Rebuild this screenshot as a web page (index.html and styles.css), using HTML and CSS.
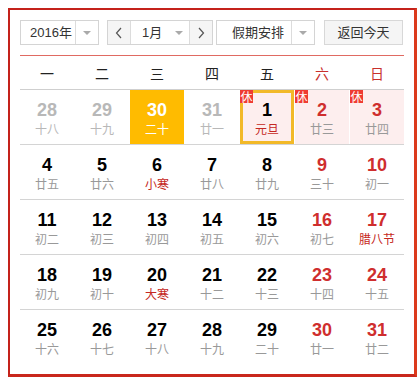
FILE: index.html
```html
<!DOCTYPE html>
<html lang="zh-CN">

<head>
    <meta charset="utf-8">
    <title>万年历</title>
    <link rel="stylesheet" href="styles.css">
</head>

<body>
    <div class="calendar">
        <!-- 顶部工具栏 -->
        <div class="toolbar">
            <div class="select year">
                <span class="selectText">2016年</span>
                <span class="selectArrow"><i></i></span>
            </div>
            <div class="monthBox">
                <span class="monthBtn">
                    <svg width="8" height="12" viewBox="0 0 8 12"><polyline points="6,1 1.5,6 6,11" /></svg>
                </span>
                <span class="monthText">1月<i></i></span>
                <span class="monthBtn">
                    <svg width="8" height="12" viewBox="0 0 8 12"><polyline points="2,1 6.5,6 2,11" /></svg>
                </span>
            </div>
            <div class="select holiday">
                <span class="selectText">假期安排</span>
                <span class="selectArrow"><i></i></span>
            </div>
            <div class="todayBtn">返回今天</div>
        </div>

        <!-- 星期 -->
        <div class="week">
            <span>一</span>
            <span>二</span>
            <span>三</span>
            <span>四</span>
            <span>五</span>
            <span class="weekend">六</span>
            <span class="weekend">日</span>
        </div>

        <!-- 日期 -->
        <div class="days">
            <div class="row">
                <div class="day other"><b>28</b><em>十八</em></div>
                <div class="day other"><b>29</b><em>十九</em></div>
                <div class="day today"><b>30</b><em>二十</em></div>
                <div class="day other"><b>31</b><em>廿一</em></div>
                <div class="day rest active"><span class="tag">休</span><b>1</b><em class="fest">元旦</em></div>
                <div class="day rest red"><span class="tag">休</span><b>2</b><em>廿三</em></div>
                <div class="day rest red"><span class="tag">休</span><b>3</b><em>廿四</em></div>
            </div>
            <div class="row">
                <div class="day"><b>4</b><em>廿五</em></div>
                <div class="day"><b>5</b><em>廿六</em></div>
                <div class="day"><b>6</b><em class="fest">小寒</em></div>
                <div class="day"><b>7</b><em>廿八</em></div>
                <div class="day"><b>8</b><em>廿九</em></div>
                <div class="day red"><b>9</b><em>三十</em></div>
                <div class="day red"><b>10</b><em>初一</em></div>
            </div>
            <div class="row">
                <div class="day"><b>11</b><em>初二</em></div>
                <div class="day"><b>12</b><em>初三</em></div>
                <div class="day"><b>13</b><em>初四</em></div>
                <div class="day"><b>14</b><em>初五</em></div>
                <div class="day"><b>15</b><em>初六</em></div>
                <div class="day red"><b>16</b><em>初七</em></div>
                <div class="day red"><b>17</b><em class="fest">腊八节</em></div>
            </div>
            <div class="row">
                <div class="day"><b>18</b><em>初九</em></div>
                <div class="day"><b>19</b><em>初十</em></div>
                <div class="day"><b>20</b><em class="fest">大寒</em></div>
                <div class="day"><b>21</b><em>十二</em></div>
                <div class="day"><b>22</b><em>十三</em></div>
                <div class="day red"><b>23</b><em>十四</em></div>
                <div class="day red"><b>24</b><em>十五</em></div>
            </div>
            <div class="row">
                <div class="day"><b>25</b><em>十六</em></div>
                <div class="day"><b>26</b><em>十七</em></div>
                <div class="day"><b>27</b><em>十八</em></div>
                <div class="day"><b>28</b><em>十九</em></div>
                <div class="day"><b>29</b><em>二十</em></div>
                <div class="day red"><b>30</b><em>廿一</em></div>
                <div class="day red"><b>31</b><em>廿二</em></div>
            </div>
        </div>
    </div>
</body>

</html>
```

FILE: styles.css
```css
* {
    margin: 0;
    padding: 0;
    box-sizing: border-box;
}

html,
body {
    font-family: "Liberation Sans", Arial, "Noto Sans CJK SC", sans-serif;
    font-size: 13px;
    color: #333;
    background: #fff;
}

body {
    padding: 8px;
}

.calendar {
    width: 409px;
    height: 369px;
    padding: 10px 10px 0 10px;
    border: 2px solid #c4221b;
    border-right: 3px solid #dc3a1c;
    border-bottom: 3px solid #c9281c;
}

/* 工具栏 */
.toolbar {
    display: flex;
    height: 25px;
    margin-right: 1px;
}

.select {
    display: flex;
    height: 25px;
    border: 1px solid #d4d4d4;
    background: #fff;
}

.select .selectText {
    line-height: 23px;
    color: #333;
}

.select .selectArrow {
    width: 23px;
    border-left: 1px solid #dcdcdc;
    display: flex;
    align-items: center;
    justify-content: center;
}

.select .selectArrow i,
.monthText i {
    display: block;
    width: 0;
    height: 0;
    border-left: 4px solid transparent;
    border-right: 4px solid transparent;
    border-top: 4px solid #aaa;
}

.year {
    width: 79px;
}

.year .selectText {
    width: 55px;
    padding-left: 9px;
}

.monthBox {
    display: flex;
    height: 25px;
    margin-left: 8px;
    border: 1px solid #d4d4d4;
}

.monthBtn {
    width: 22px;
    background: #f5f5f5;
    display: flex;
    align-items: center;
    justify-content: center;
}

.monthBtn svg polyline {
    fill: none;
    stroke: #555;
    stroke-width: 1.2;
}

.monthText {
    width: 60px;
    display: flex;
    align-items: center;
    padding-left: 11px;
    gap: 13px;
    line-height: 23px;
    border-left: 1px solid #dcdcdc;
    border-right: 1px solid #dcdcdc;
    background: #fff;
}

.holiday {
    width: 99px;
    margin-left: 3px;
}

.holiday .selectText {
    width: 74px;
    padding-left: 15px;
}

.todayBtn {
    width: 81px;
    height: 25px;
    margin-left: 9px;
    border: 1px solid #d8d8d8;
    background: #f5f5f5;
    line-height: 23px;
    text-align: center;
    color: #333;
}

/* 星期 */
.week {
    display: grid;
    grid-template-columns: repeat(7, 54px);
    column-gap: 1px;
    margin-top: 10px;
    height: 35px;
    border-top: 1px solid #e06a62;
    border-bottom: 1px solid #cfcfcf;
}

.week span {
    text-align: center;
    font-size: 14px;
    line-height: 34px;
    padding-top: 1px;
    color: #222;
}

.week .weekend {
    color: #c8302c;
}

/* 日期 */
.row {
    display: grid;
    grid-template-columns: repeat(7, 54px);
    column-gap: 1px;
    height: 55px;
    border-top: 1px solid #d4d4d4;
}

.row:first-child {
    border-top: none;
    height: 54px;
}

.day {
    position: relative;
    display: flex;
    flex-direction: column;
    align-items: center;
    padding-top: 10px;
}

.day b {
    font-size: 18px;
    line-height: 20px;
    font-weight: bold;
    color: #000;
}

.day em {
    font-style: normal;
    font-size: 12px;
    line-height: 18px;
    color: #999;
    font-family: "Noto Sans CJK SC", sans-serif;
}

.day em.fest {
    color: #c52722;
}

.day.red b {
    color: #cf2e2e;
}

.day.other b,
.day.other em {
    color: #b8b8b8;
}

.day.today {
    background: #ffbb00;
}

.day.today b,
.day.today em {
    color: #fff;
}

.day.rest {
    background: #fdeeee;
}

.day.active {
    border: 3px solid #f2b928;
    padding-top: 7px;
}

.day .tag {
    position: absolute;
    left: 0;
    top: 0;
    width: 13px;
    height: 13px;
    background: #ef3b32;
    color: #fff;
    font-size: 12px;
    line-height: 13px;
    text-align: center;
    font-family: "Noto Sans CJK SC", sans-serif;
}

.day.active .tag {
    left: -3px;
    top: -3px;
}
```
